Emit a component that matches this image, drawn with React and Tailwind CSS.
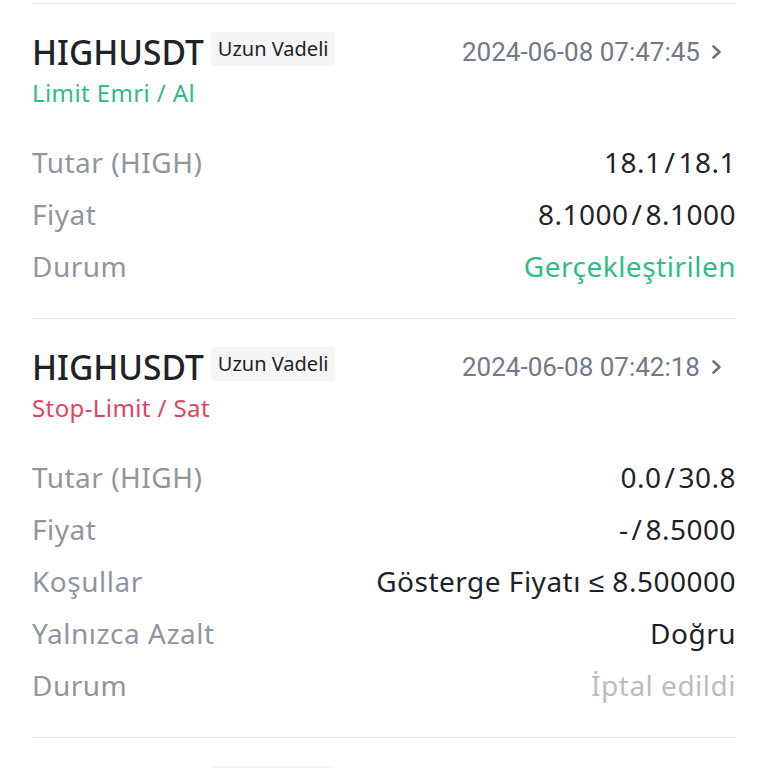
import React from "react";

const sans = "font-['Noto_Sans',_'Liberation_Sans',_sans-serif]";

function Chevron() {
  return (
    <svg width="26" height="26" viewBox="0 0 26 26" className="ml-[10px] shrink-0">
      <path d="M3.5 7.5 L9.5 13 L3.5 18.5" fill="none" stroke="#6f7680" strokeWidth="2.6" strokeLinecap="round" strokeLinejoin="round" />
    </svg>
  );
}

function Pair({ a, b }) {
  return (
    <span>
      {a}
      <span className="mx-[3px]">/</span>
      {b}
    </span>
  );
}

function Row({ label, value, valueClass = "text-[#1e2329]" }) {
  return (
    <div className="flex h-[52px] items-center justify-between">
      <span className="text-[28px] leading-[36px] tracking-[0.5px] text-[#8f96a0]">{label}</span>
      <span className={"text-[28px] leading-[36px] tracking-[0.5px] " + valueClass}>{value}</span>
    </div>
  );
}

function Card({ date, type, typeClass, rows }) {
  return (
    <div className="border-t border-[#eaecef] pt-[26px] pb-[26px]">
      <div className="flex h-[44px] items-start justify-between">
        <div className="flex items-start">
          <span className="text-[33.5px] leading-[44px] font-medium text-[#1e2329]">HIGHUSDT</span>
          <span className="ml-[7px] mt-[2px] flex h-[34px] items-center rounded-[3px] bg-[#f5f5f5] px-[7px] text-[20px] text-[#1e2329]">
            Uzun Vadeli
          </span>
        </div>
        <div className="flex h-[44px] items-center">
          <span className="font-['Roboto',_sans-serif] text-[26px] leading-[30px] text-[#707a8a]">{date}</span>
          <Chevron />
        </div>
      </div>
      <div className={"mt-[3px] text-[24px] leading-[32px] tracking-[0.4px] " + typeClass}>{type}</div>
      <div className="mt-[27px] flex flex-col">
        {rows.map((r, i) => (
          <Row key={i} {...r} />
        ))}
      </div>
    </div>
  );
}

export default function App() {
  return (
    <div className={"h-[768px] w-full overflow-hidden bg-white px-8 pt-[3px] " + sans}>
      <Card
        date="2024-06-08 07:47:45"
        type="Limit Emri / Al"
        typeClass="text-[#2ebd85]"
        rows={[
          { label: "Tutar (HIGH)", value: <Pair a="18.1" b="18.1" /> },
          { label: "Fiyat", value: <Pair a="8.1000" b="8.1000" /> },
          { label: "Durum", value: "Gerçekleştirilen", valueClass: "text-[#2ebd85]" },
        ]}
      />
      <Card
        date="2024-06-08 07:42:18"
        type="Stop-Limit / Sat"
        typeClass="text-[#e0445e]"
        rows={[
          { label: "Tutar (HIGH)", value: <Pair a="0.0" b="30.8" /> },
          { label: "Fiyat", value: <Pair a="-" b="8.5000" /> },
          { label: "Koşullar", value: "Gösterge Fiyatı ≤ 8.500000" },
          { label: "Yalnızca Azalt", value: "Doğru" },
          { label: "Durum", value: "İptal edildi", valueClass: "text-[#b7bdc6]" },
        ]}
      />
      <Card
        date="2024-06-08 07:40:02"
        type="Limit Emri / Al"
        typeClass="text-[#2ebd85]"
        rows={[{ label: "Tutar (HIGH)", value: <Pair a="0.0" b="0.0" /> }]}
      />
    </div>
  );
}
